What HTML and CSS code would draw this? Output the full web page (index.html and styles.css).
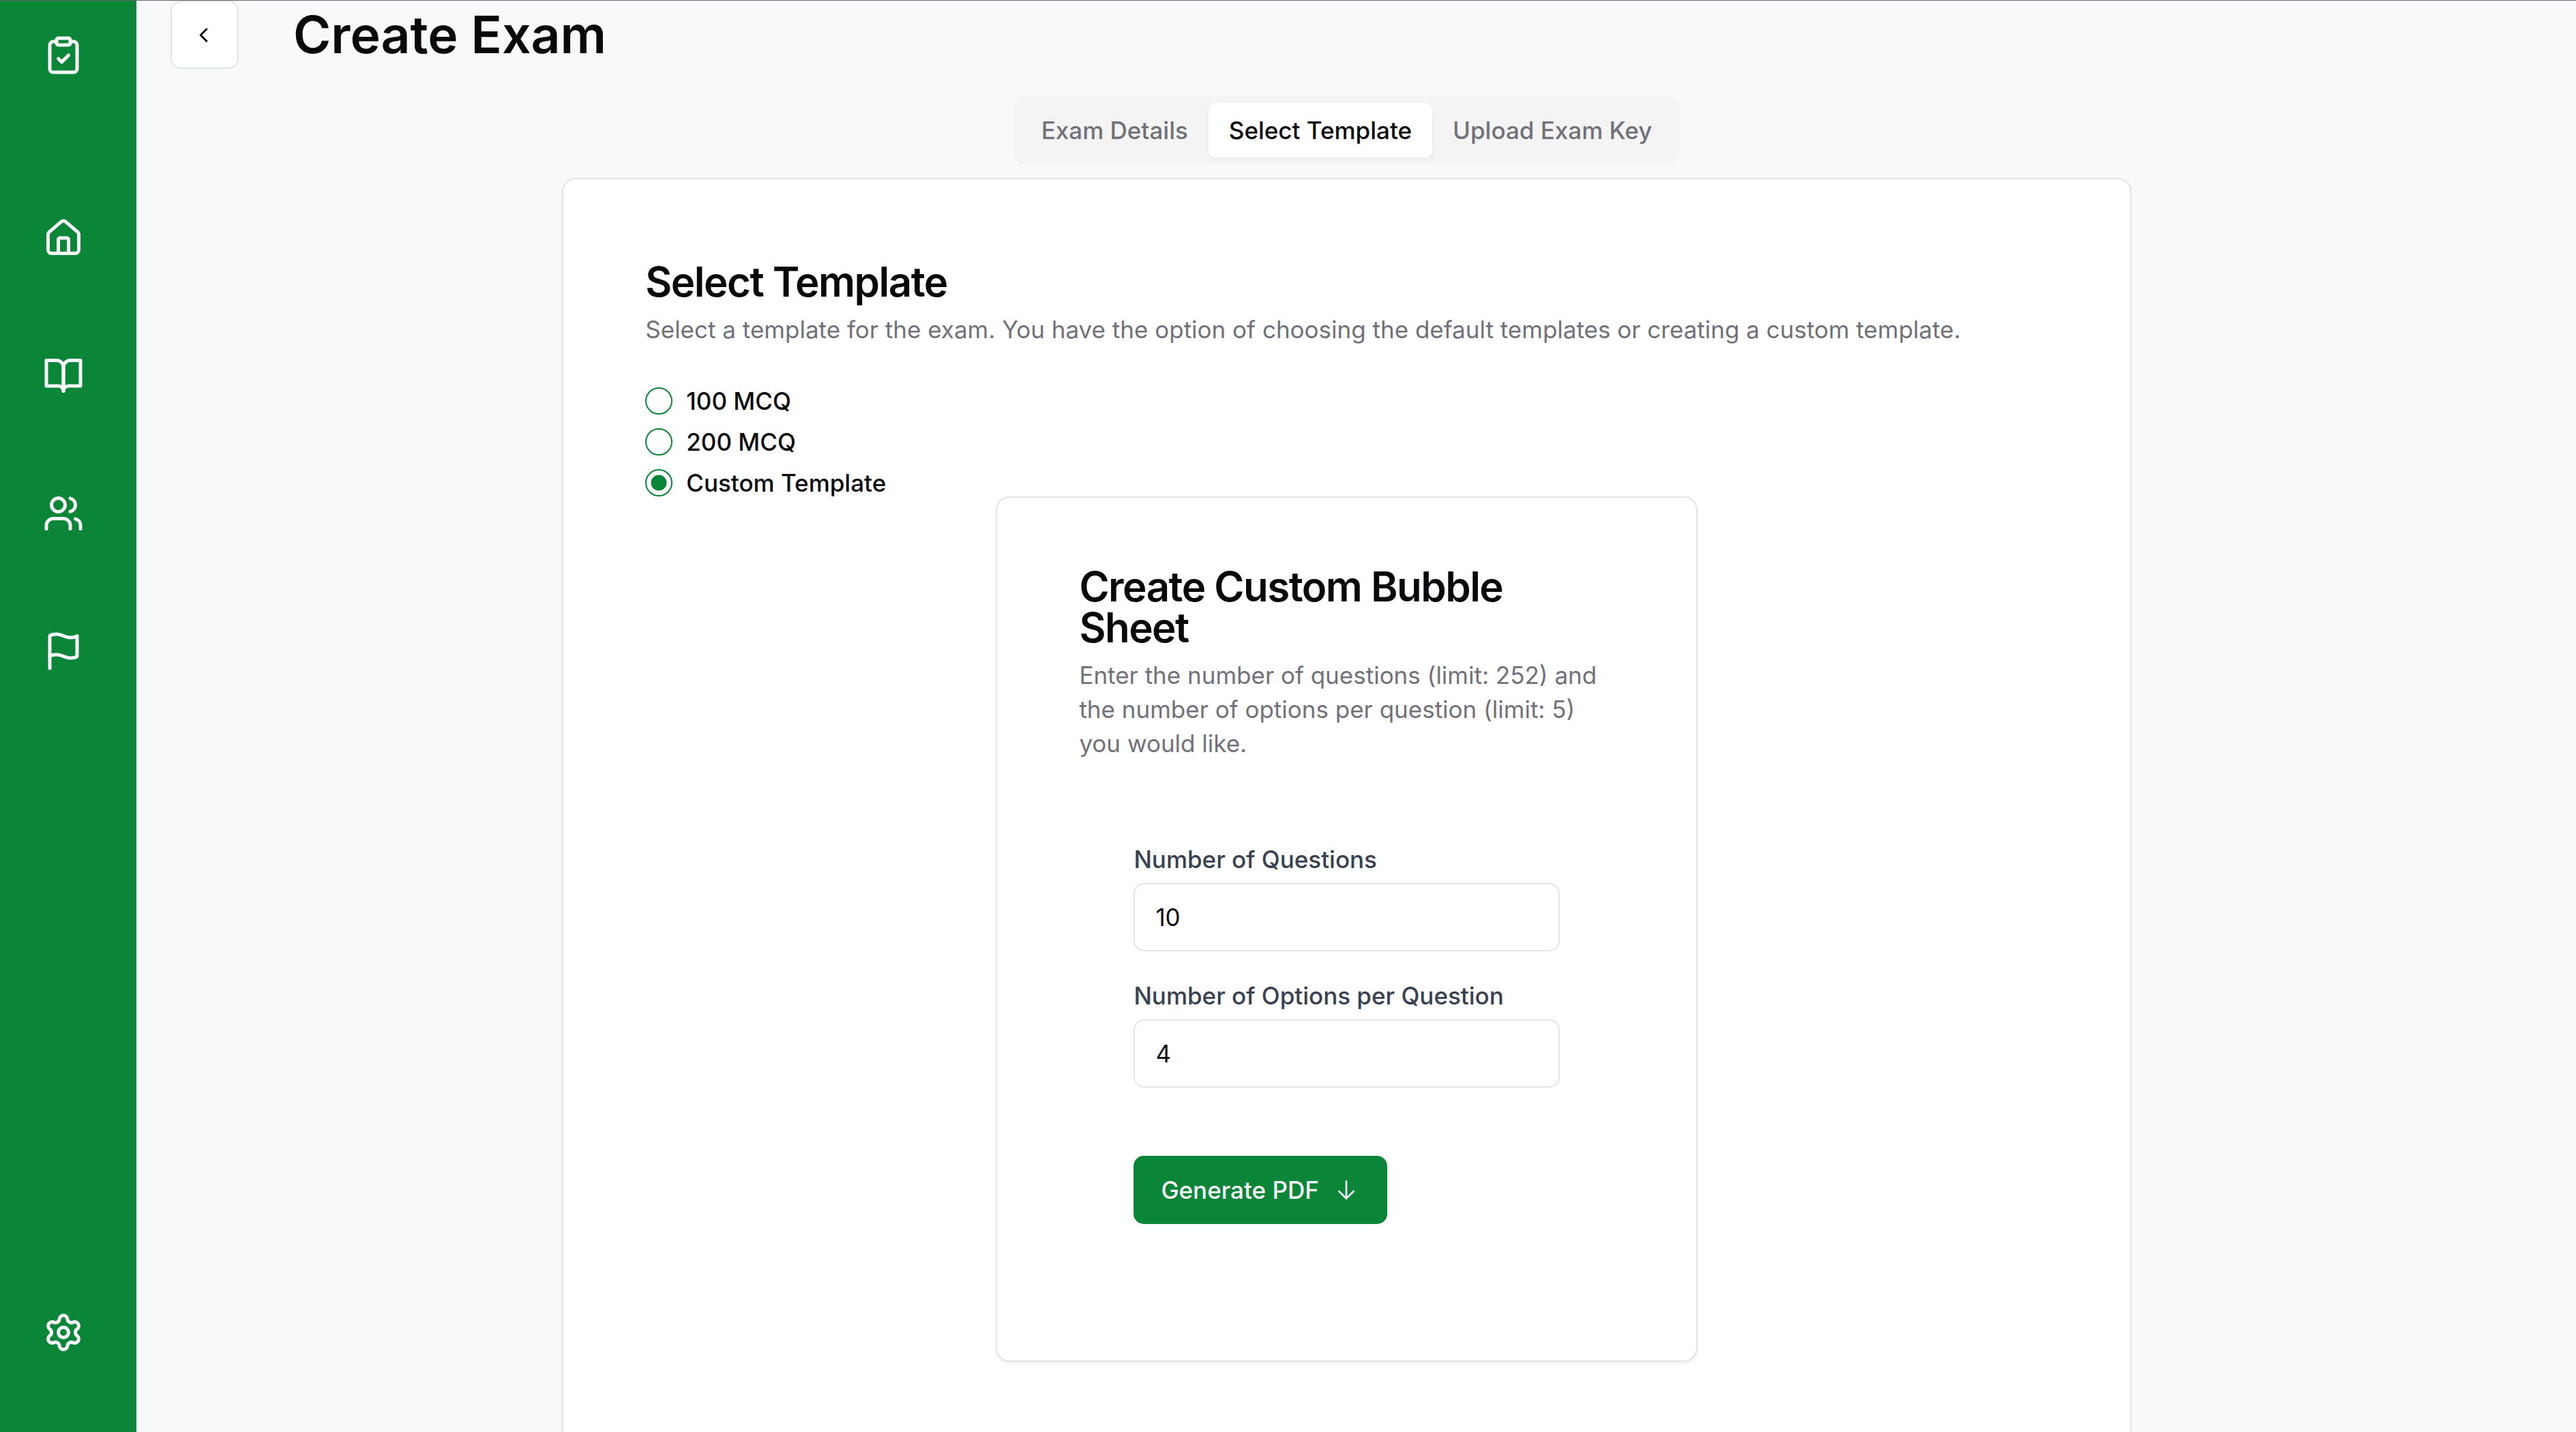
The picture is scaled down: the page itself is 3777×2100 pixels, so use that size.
FILE: index.html
```html
<!DOCTYPE html>
<html lang="en">
<head>
<meta charset="utf-8">
<meta name="viewport" content="width=device-width, initial-scale=1">
<title>Create Exam</title>
<link rel="stylesheet" href="styles.css">
</head>
<body>
<div class="app">
  <nav class="sidebar" aria-label="Main">
    <a class="nav-link brand" href="#" aria-label="Exams"><svg class="icon" viewBox="0 0 24 24"><rect x="8" y="2" width="8" height="4" rx="1"/><path d="M16 4h2a2 2 0 0 1 2 2v14a2 2 0 0 1-2 2H6a2 2 0 0 1-2-2V6a2 2 0 0 1 2-2h2"/><path d="m9 14 2 2 4-4"/></svg></a>
    <div class="nav-group">
      <a class="nav-link" href="#" aria-label="Home"><svg class="icon" viewBox="0 0 24 24"><path d="M15 21v-8a1 1 0 0 0-1-1h-4a1 1 0 0 0-1 1v8"/><path d="M3 10a2 2 0 0 1 .709-1.528l7-5.999a2 2 0 0 1 2.582 0l7 5.999A2 2 0 0 1 21 10v9a2 2 0 0 1-2 2H5a2 2 0 0 1-2-2z"/></svg></a>
      <a class="nav-link" href="#" aria-label="Courses"><svg class="icon" viewBox="0 0 24 24"><path d="M2 3h6a4 4 0 0 1 4 4v14a3 3 0 0 0-3-3H2z"/><path d="M22 3h-6a4 4 0 0 0-4 4v14a3 3 0 0 1 3-3h7z"/></svg></a>
      <a class="nav-link" href="#" aria-label="Students"><svg class="icon" viewBox="0 0 24 24"><path d="M16 21v-2a4 4 0 0 0-4-4H6a4 4 0 0 0-4 4v2"/><circle cx="9" cy="7" r="4"/><path d="M22 21v-2a4 4 0 0 0-3-3.87"/><path d="M16 3.13a4 4 0 0 1 0 7.75"/></svg></a>
      <a class="nav-link" href="#" aria-label="Reports"><svg class="icon" viewBox="0 0 24 24"><path d="M4 15s1-1 4-1 5 2 8 2 4-1 4-1V3s-1 1-4 1-5-2-8-2-4 1-4 1z"/><path d="M4 22v-7"/></svg></a>
    </div>
    <a class="nav-link settings" href="#" aria-label="Settings"><svg class="icon" viewBox="0 0 24 24"><path d="M9.671 4.136a2.34 2.34 0 0 1 4.659 0 2.34 2.34 0 0 0 3.319 1.915 2.34 2.34 0 0 1 2.33 4.033 2.34 2.34 0 0 0 0 3.831 2.34 2.34 0 0 1-2.33 4.033 2.34 2.34 0 0 0-3.319 1.915 2.34 2.34 0 0 1-4.659 0 2.34 2.34 0 0 0-3.32-1.915 2.34 2.34 0 0 1-2.33-4.033 2.34 2.34 0 0 0 0-3.831A2.34 2.34 0 0 1 6.35 6.051a2.34 2.34 0 0 0 3.319-1.915"/><circle cx="12" cy="12" r="3"/></svg></a>
  </nav>

  <main class="main">
    <header class="page-header">
      <button class="back" type="button" aria-label="Back"><svg class="icon icon-back" viewBox="0 0 24 24"><path d="m15 18-6-6 6-6"/></svg></button>
      <h1 class="page-title">Create Exam</h1>
    </header>

    <div class="tabs" role="tablist">
      <button class="tab" type="button" role="tab">Exam Details</button>
      <button class="tab tab-active" type="button" role="tab" aria-selected="true">Select Template</button>
      <button class="tab" type="button" role="tab">Upload Exam Key</button>
    </div>

    <section class="card template-card">
      <div class="card-header">
        <h2 class="card-title">Select Template</h2>
        <p class="card-text">Select a template for the exam. You have the option of choosing the default templates or creating a custom template.</p>
      </div>
      <div class="options">
        <label class="option"><input class="radio" type="radio" name="template"><span>100 MCQ</span></label>
        <label class="option"><input class="radio" type="radio" name="template"><span>200 MCQ</span></label>
        <label class="option"><input class="radio" type="radio" name="template" checked><span>Custom Template</span></label>
      </div>

      <section class="card sheet-card">
        <div class="card-header">
          <h2 class="card-title">Create Custom Bubble Sheet</h2>
          <p class="card-text">Enter the number of questions (limit: 252) and the number of options per question (limit: 5) you would like.</p>
        </div>
        <form class="form">
          <div class="field">
            <label class="field-label" for="questions">Number of Questions</label>
            <input class="field-input" id="questions" type="text" inputmode="numeric" value="10">
          </div>
          <div class="field">
            <label class="field-label" for="choices">Number of Options per Question</label>
            <input class="field-input" id="choices" type="text" inputmode="numeric" value="4">
          </div>
          <button class="generate" type="button">Generate PDF <svg class="arrow" viewBox="0 0 15 15"><path d="M7.5 2.75v9.5M3.5 8.25l4 4 4-4"/></svg></button>
        </form>
      </section>
    </section>
  </main>
</div>
</body>
</html>
```
FILE: styles.css
```css
:root {
  --green: #0b8537;
  --ink: #09090b;
  --muted: #71717a;
  --line: #e4e4e5;
}

* { box-sizing: border-box; }

body {
  margin: 0;
  background: #f8f9fb;
  color: var(--ink);
  font: 500 35px/50px Inter, "Liberation Sans", sans-serif;
}

h1, h2, p { margin: 0; }

button, input { font: inherit; color: inherit; }

.app {
  display: flex;
  height: 100vh;
  overflow: hidden;
  border-top: 1px solid #66636b;
}

.sidebar {
  display: flex;
  flex-direction: column;
  flex: none;
  width: 200px;
  padding: 50px 14px 116px 0;
  align-items: center;
  background: var(--green);
  color: #fafafa;
}

.nav-link { display: block; color: inherit; }
.nav-group {
  display: flex;
  flex-direction: column;
  gap: 142px;
  margin-top: 208px;
}
.settings { margin-top: auto; }

.icon {
  display: block;
  width: 60px;
  height: 60px;
  fill: none;
  stroke: currentColor;
  stroke-width: 2;
  stroke-linecap: round;
  stroke-linejoin: round;
}
.icon-back { width: 35px; height: 35px; }

.main {
  display: flex;
  flex-direction: column;
  flex: 1;
  align-items: center;
  padding: 0 78px 0 50px;
}

.page-header {
  display: flex;
  align-items: center;
  align-self: stretch;
  gap: 80px;
}

.back {
  display: flex;
  align-items: center;
  justify-content: center;
  width: 100px;
  height: 100px;
  padding: 0 4px 0 0;
  border: 2px solid var(--line);
  border-radius: 15px;
  background: #fff;
}

.page-title { font-size: 75px; font-weight: 600; line-height: 100px; }

.tabs {
  display: flex;
  flex: none;
  margin-top: 40px;
  padding: 10px;
  border-radius: 15px;
  background: #f4f4f4;
}

.tab {
  padding: 15px 30px;
  border: 0;
  border-radius: 10px;
  background: none;
  color: var(--muted);
}
.tab-active {
  background: #fff;
  color: var(--ink);
  box-shadow: 0 3px 5px rgb(0 0 0 / 5%);
}

.card {
  border: 2px solid var(--line);
  border-radius: 20px;
  background: #fff;
  box-shadow: 0 3px 5px rgb(0 0 0 / 5%);
}

.template-card {
  flex: none;
  width: 66.7%;
  margin-top: 20px;
  padding: 120px;
}

.card-header { display: grid; gap: 15px; }
.card-title { font-size: 60px; font-weight: 600; line-height: 60px; letter-spacing: -0.025em; }
.card-text { color: var(--muted); font-weight: 400; }

.options { display: grid; gap: 20px; margin-top: 60px; }
.option { display: flex; align-items: center; gap: 20px; line-height: 40px; }

.radio {
  width: 40px;
  height: 40px;
  margin: 0;
  border: 2px solid var(--green);
  border-radius: 50%;
  appearance: none;
}
.radio:checked { background: radial-gradient(circle, var(--green) 11px, transparent 12px); }

.sheet-card {
  width: 50%;
  margin: 0 auto;
  padding: 100px 120px 120px;
}

.form {
  display: flex;
  flex-direction: column;
  gap: 40px;
  padding: 120px 80px 80px;
}
.field { display: grid; gap: 10px; }
.field-label { color: #374151; }
.field-input {
  width: 100%;
  height: 100px;
  padding: 0 30px;
  border: 2px solid var(--line);
  border-radius: 15px;
  background: #fff;
  font-weight: 400;
}

.generate {
  display: flex;
  align-items: center;
  align-self: flex-start;
  gap: 20px;
  margin-top: 60px;
  padding: 25px 40px;
  border: 0;
  border-radius: 15px;
  background: var(--green);
  color: #fafafa;
}
.arrow {
  width: 40px;
  height: 40px;
  fill: none;
  stroke: currentColor;
  stroke-linecap: round;
  stroke-linejoin: round;
}
```
